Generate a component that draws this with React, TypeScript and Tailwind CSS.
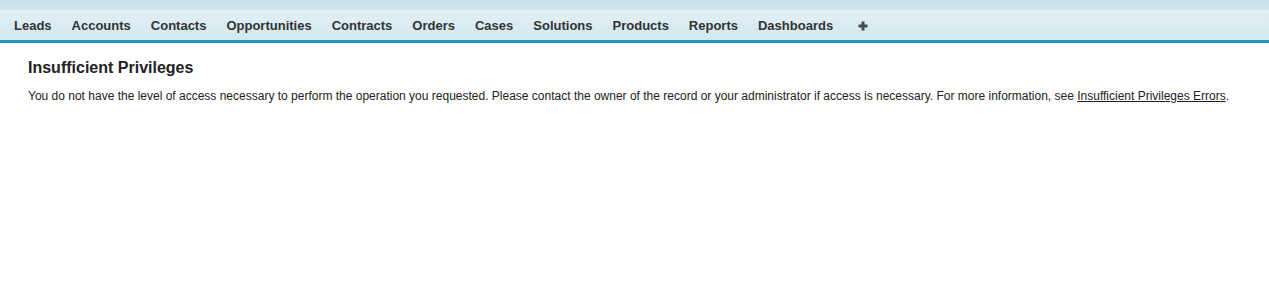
import React from "react";

const tabs = [
  "Leads",
  "Accounts",
  "Contacts",
  "Opportunities",
  "Contracts",
  "Orders",
  "Cases",
  "Solutions",
  "Products",
  "Reports",
  "Dashboards",
];

export default function App() {
  return (
    <div
      className="w-[1269px] h-[291px] bg-white"
      style={{ fontFamily: '"Liberation Sans", Arial, sans-serif' }}
    >
      <div className="h-[10px] bg-gradient-to-b from-[#c6dfe9] to-[#d3e8ef]" />
      <div className="h-[30px] bg-gradient-to-b from-[#e2f0f6] to-[#d2e7ef] flex items-center pl-1 pt-[2px]">
        {tabs.map((t) => (
          <span
            key={t}
            className="px-[10px] text-[13px] font-bold text-[#333333] leading-[28px]"
          >
            {t}
          </span>
        ))}
        <span className="ml-[5px] px-[10px] flex items-center">
          <svg width="10" height="10" viewBox="0 0 10 10">
            <rect x="3.5" y="0.5" width="3" height="9" fill="#4a4a4a" />
            <rect x="0.5" y="3.5" width="9" height="3" fill="#4a4a4a" />
          </svg>
        </span>
      </div>
      <div className="h-[3px] bg-[#2395b8]" />
      <div className="pl-[28px] pt-[15px]">
        <h1 className="text-[16px] font-bold text-[#222222] leading-[20px]">
          Insufficient Privileges
        </h1>
        <p className="mt-[10px] text-[12px] text-[#222222] leading-[16px]">
          You do not have the level of access necessary to perform the operation you
          requested. Please contact the owner of the record or your administrator if
          access is necessary. For more information, see{" "}
          <span className="underline">Insufficient Privileges Errors</span>.
        </p>
      </div>
    </div>
  );
}
